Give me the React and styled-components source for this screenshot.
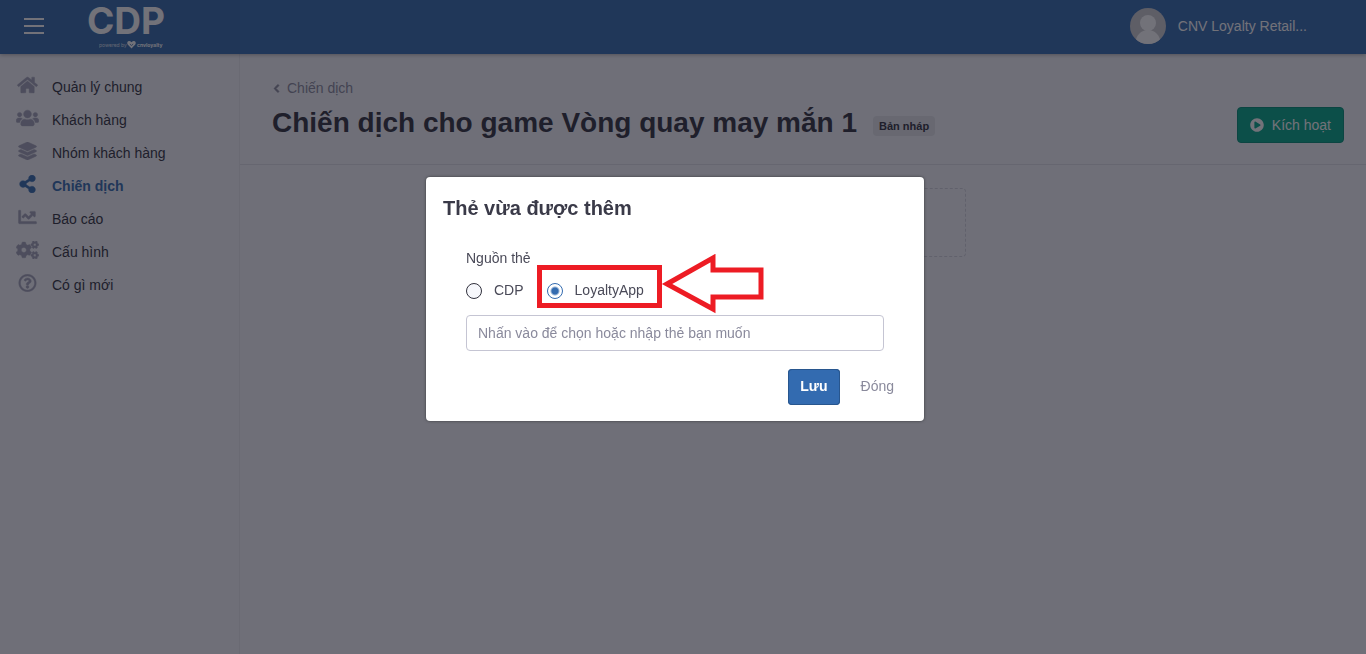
import React, { useState } from 'react';
import styled, { createGlobalStyle } from 'styled-components';
import {
  FaHome,
  FaUsers,
  FaLayerGroup,
  FaShareAlt,
  FaChartLine,
  FaCogs,
  FaRegQuestionCircle,
  FaChevronLeft,
  FaPlayCircle,
} from 'react-icons/fa';

const menu = [
  { name: 'Quản lý chung', icon: FaHome },
  { name: 'Khách hàng', icon: FaUsers },
  { name: 'Nhóm khách hàng', icon: FaLayerGroup },
  { name: 'Chiến dịch', icon: FaShareAlt, active: true },
  { name: 'Báo cáo', icon: FaChartLine },
  { name: 'Cấu hình', icon: FaCogs },
  { name: 'Có gì mới', icon: FaRegQuestionCircle },
];

function Logo() {
  return (
    <LogoSvg width="84" height="54" viewBox="0 0 84 54" fill="#fff" role="img" aria-label="CDP">
      <text x="0" y="34" fontFamily="Inter, sans-serif" fontWeight="700" fontSize="37">CDP</text>
      <text x="12" y="47" fontFamily="Inter, sans-serif" fontSize="5" opacity="0.8">powered by</text>
      <path d="M44.500 48.500 L40.700 44.500 C39 42 42 39.500 44.500 42.300 C47 39.500 50 42 48.300 44.500 Z" />
      <path d="M42.800 44 L44.500 45.500 L46.200 44" fill="none" stroke="#326aaa" strokeWidth="0.8" />
      <text x="50" y="47" fontFamily="Inter, sans-serif" fontWeight="700" fontSize="5">cnvloyalty</text>
    </LogoSvg>
  );
}

function Avatar() {
  return (
    <svg width="36" height="36" viewBox="0 0 36 36" aria-hidden="true">
      <defs>
        <clipPath id="round">
          <circle cx="18" cy="18" r="18" />
        </clipPath>
      </defs>
      <g clipPath="url(#round)">
        <rect width="36" height="36" fill="#cccccf" />
        <circle cx="18" cy="15" r="8" fill="#fff" />
        <path d="M5 36 C6 27 11 22 18 22 C25 22 30 27 31 36 Z" fill="#fff" />
      </g>
    </svg>
  );
}

function TagModal() {
  const [source, setSource] = useState('loyalty');

  return (
    <Overlay>
      <Modal role="dialog" aria-modal="true" aria-labelledby="modal-title">
        <ModalTitle id="modal-title">Thẻ vừa được thêm</ModalTitle>
        <Fields>
          <Legend>Nguồn thẻ</Legend>
          <Radios>
            <RadioLabel>
              <Radio type="radio" name="source" checked={source === 'cdp'} onChange={() => setSource('cdp')} />
              CDP
            </RadioLabel>
            <RadioLabel>
              <Radio type="radio" name="source" checked={source === 'loyalty'} onChange={() => setSource('loyalty')} />
              LoyaltyApp
              <Frame />
              <Arrow width="104" height="60" viewBox="0 0 104 60" aria-hidden="true">
                <path d="M7 30 L53 4 V16 H101 V43 H53 V55 Z" fill="#fff" stroke="#ed1c24" strokeWidth="5" />
              </Arrow>
            </RadioLabel>
          </Radios>
          <TagInput type="text" aria-label="Thẻ" placeholder="Nhấn vào để chọn hoặc nhập thẻ bạn muốn" />
        </Fields>
        <Actions>
          <SaveButton type="button">Lưu</SaveButton>
          <CloseButton type="button">Đóng</CloseButton>
        </Actions>
      </Modal>
    </Overlay>
  );
}

function App() {
  return (
    <>
      <GlobalStyle />
      <Page>
        <TopBar>
          <Brand>
            <MenuButton type="button" aria-label="Menu">
              <i />
              <i />
              <i />
            </MenuButton>
            <Logo />
          </Brand>
          <User>
            <Avatar />
            <span>CNV Loyalty Retail...</span>
          </User>
        </TopBar>
        <Body>
          <Sidebar>
            {menu.map(({ name, icon: Icon, active }) => (
              <MenuItem key={name} href="#" $active={active}>
                <Icon />
                {name}
              </MenuItem>
            ))}
          </Sidebar>
          <Main>
            <PageHeader>
              <div>
                <Back href="#">
                  <FaChevronLeft />
                  Chiến dịch
                </Back>
                <TitleRow>
                  <Title>Chiến dịch cho game Vòng quay may mắn 1</Title>
                  <Badge>Bản nháp</Badge>
                </TitleRow>
              </div>
              <ActivateButton type="button">
                <FaPlayCircle />
                Kích hoạt
              </ActivateButton>
            </PageHeader>
            <DropZone />
          </Main>
        </Body>
      </Page>
      <TagModal />
    </>
  );
}

const GlobalStyle = createGlobalStyle`
  *{
    box-sizing: border-box;
  }
  body{
    margin: 0;
    font-family: "Liberation Sans", Arial, sans-serif;
    font-size: 14px;
    line-height: 20px;
    color: #31313d;
    background: #f7f8fc;
  }
  button, input{
    font: inherit;
  }
  a{
    color: inherit;
    text-decoration: none;
  }
`

const Page = styled.div`
  min-height: 100vh;
  display: flex;
  flex-direction: column;
`

const TopBar = styled.header`
  height: 54px;
  display: flex;
  justify-content: space-between;
  background: #336bb0;
  color: #fff;
  box-shadow: 0 1px 4px rgba(0, 0, 0, .3);
  z-index: 1;
`

const Brand = styled.div`
  width: 240px;
  display: flex;
  align-items: center;
  gap: 43px;
  padding-left: 24px;
  background: #326aaa;
`

const LogoSvg = styled.svg`
  overflow: visible;
`

const MenuButton = styled.button`
  width: 20px;
  padding: 0 0 2px;
  display: grid;
  gap: 5px;
  border: 0;
  background: none;

  i{
    height: 2px;
    background: #fff;
  }
`

const User = styled.div`
  display: flex;
  align-items: center;
  gap: 12px;
  padding: 0 59px 2px 0;
`

const Body = styled.div`
  flex: 1;
  display: flex;
`

const Sidebar = styled.nav`
  width: 240px;
  flex: none;
  padding-top: 16px;
  border-right: 1px solid #eaebf1;
`

const MenuItem = styled.a`
  height: 33px;
  display: flex;
  align-items: center;
  gap: 12px;
  padding-left: 16px;
  color: ${({ $active }) => ($active ? '#336bb0' : '#31313d')};
  font-weight: ${({ $active }) => ($active ? 'bold' : 'normal')};

  svg{
    width: 23px;
    height: 18px;
    margin: 0 1px 4px 0;
    stroke-width: 12px;
    color: ${({ $active }) => ($active ? '#336bb0' : '#a3a3b8')};
  }
`

const Main = styled.main`
  flex: 1;
  min-width: 0;
`

const PageHeader = styled.div`
  display: flex;
  align-items: flex-end;
  justify-content: space-between;
  padding: 24px 22px 21px 32px;
  border-bottom: 1px solid #e0e0e8;
`

const Back = styled.a`
  display: flex;
  align-items: center;
  gap: 6px;
  color: #8a8a9c;

  svg{
    width: 9px;
    height: 9px;
    stroke-width: 50px;
  }
`

const TitleRow = styled.div`
  display: flex;
  align-items: center;
  gap: 16px;
  padding-top: 5px;
`

const Title = styled.h1`
  margin: 0;
  font-size: 28px;
  line-height: 40px;
`

const Badge = styled.span`
  padding: 0 6px;
  margin-top: 6px;
  border-radius: 4px;
  background: #e6e6ea;
  font-size: 11px;
  font-weight: bold;
`

const ActivateButton = styled.button`
  height: 36px;
  display: flex;
  align-items: center;
  gap: 8px;
  padding: 0 12px;
  border: 1px solid #008f75;
  border-radius: 4px;
  background: #02a787;
  color: #fff;
`

const DropZone = styled.div`
  width: 326px;
  height: 69px;
  margin: 23px auto 0;
  border: 1px dashed #d5d5df;
  border-radius: 4px;
`

const Overlay = styled.div`
  position: fixed;
  inset: 0;
  z-index: 10;
  display: flex;
  justify-content: center;
  align-items: flex-start;
  padding: 177px 16px 0 0;
  background: rgba(20, 20, 32, .6);
`

const Modal = styled.div`
  width: 498px;
  padding: 16px;
  border-radius: 4px;
  background: #fff;
  box-shadow: 0 0 3px rgba(0, 0, 0, .5);
`

const ModalTitle = styled.h2`
  margin: 0;
  padding-left: 1px;
  font-size: 20px;
  line-height: 30px;
  color: #3a3a48;
`

const Fields = styled.div`
  padding: 25px 24px 0;
  color: #4a4a58;
`

const Legend = styled.div`
  margin-bottom: 12px;
`

const Radios = styled.div`
  display: flex;
  gap: 23px;
  margin-bottom: 15px;
`

const RadioLabel = styled.label`
  position: relative;
  display: flex;
  align-items: center;
  gap: 12px;
`

const Radio = styled.input`
  appearance: none;
  width: 16px;
  height: 16px;
  margin: 1px 0 0;
  border: 1px solid #31313d;
  border-radius: 50%;
  background: #f7f8fc;

  &:checked{
    border-color: #336bb0;
    background: radial-gradient(circle, #336bb0 3px, #fff 5px);
  }
`

// red marks around the LoyaltyApp option
const Frame = styled.span`
  position: absolute;
  top: -15px;
  bottom: -8px;
  left: -10px;
  right: -18px;
  border: 5px solid #ed1c24;
`

const Arrow = styled.svg`
  position: absolute;
  top: -26px;
  left: 100%;
  margin-left: 16px;
`

const TagInput = styled.input`
  display: block;
  width: 100%;
  height: 36px;
  padding: 0 11px;
  border: 1px solid #c5c5d3;
  border-radius: 4px;
  background: #fff;

  &::placeholder{
    color: #8a8a9c;
    opacity: 1;
  }
`

const Actions = styled.div`
  display: flex;
  justify-content: flex-end;
  gap: 9px;
  padding: 18px 2px 0 0;
`

const Button = styled.button`
  height: 36px;
  padding: 0 12px 2px;
  border: 0;
  border-radius: 4px;
`

const SaveButton = styled(Button)`
  box-shadow: inset 0 0 0 1px #28568e;
  background: #336bb0;
  color: #fff;
  font-weight: bold;
`

const CloseButton = styled(Button)`
  background: none;
  color: #8a8a9c;
`

export default App
